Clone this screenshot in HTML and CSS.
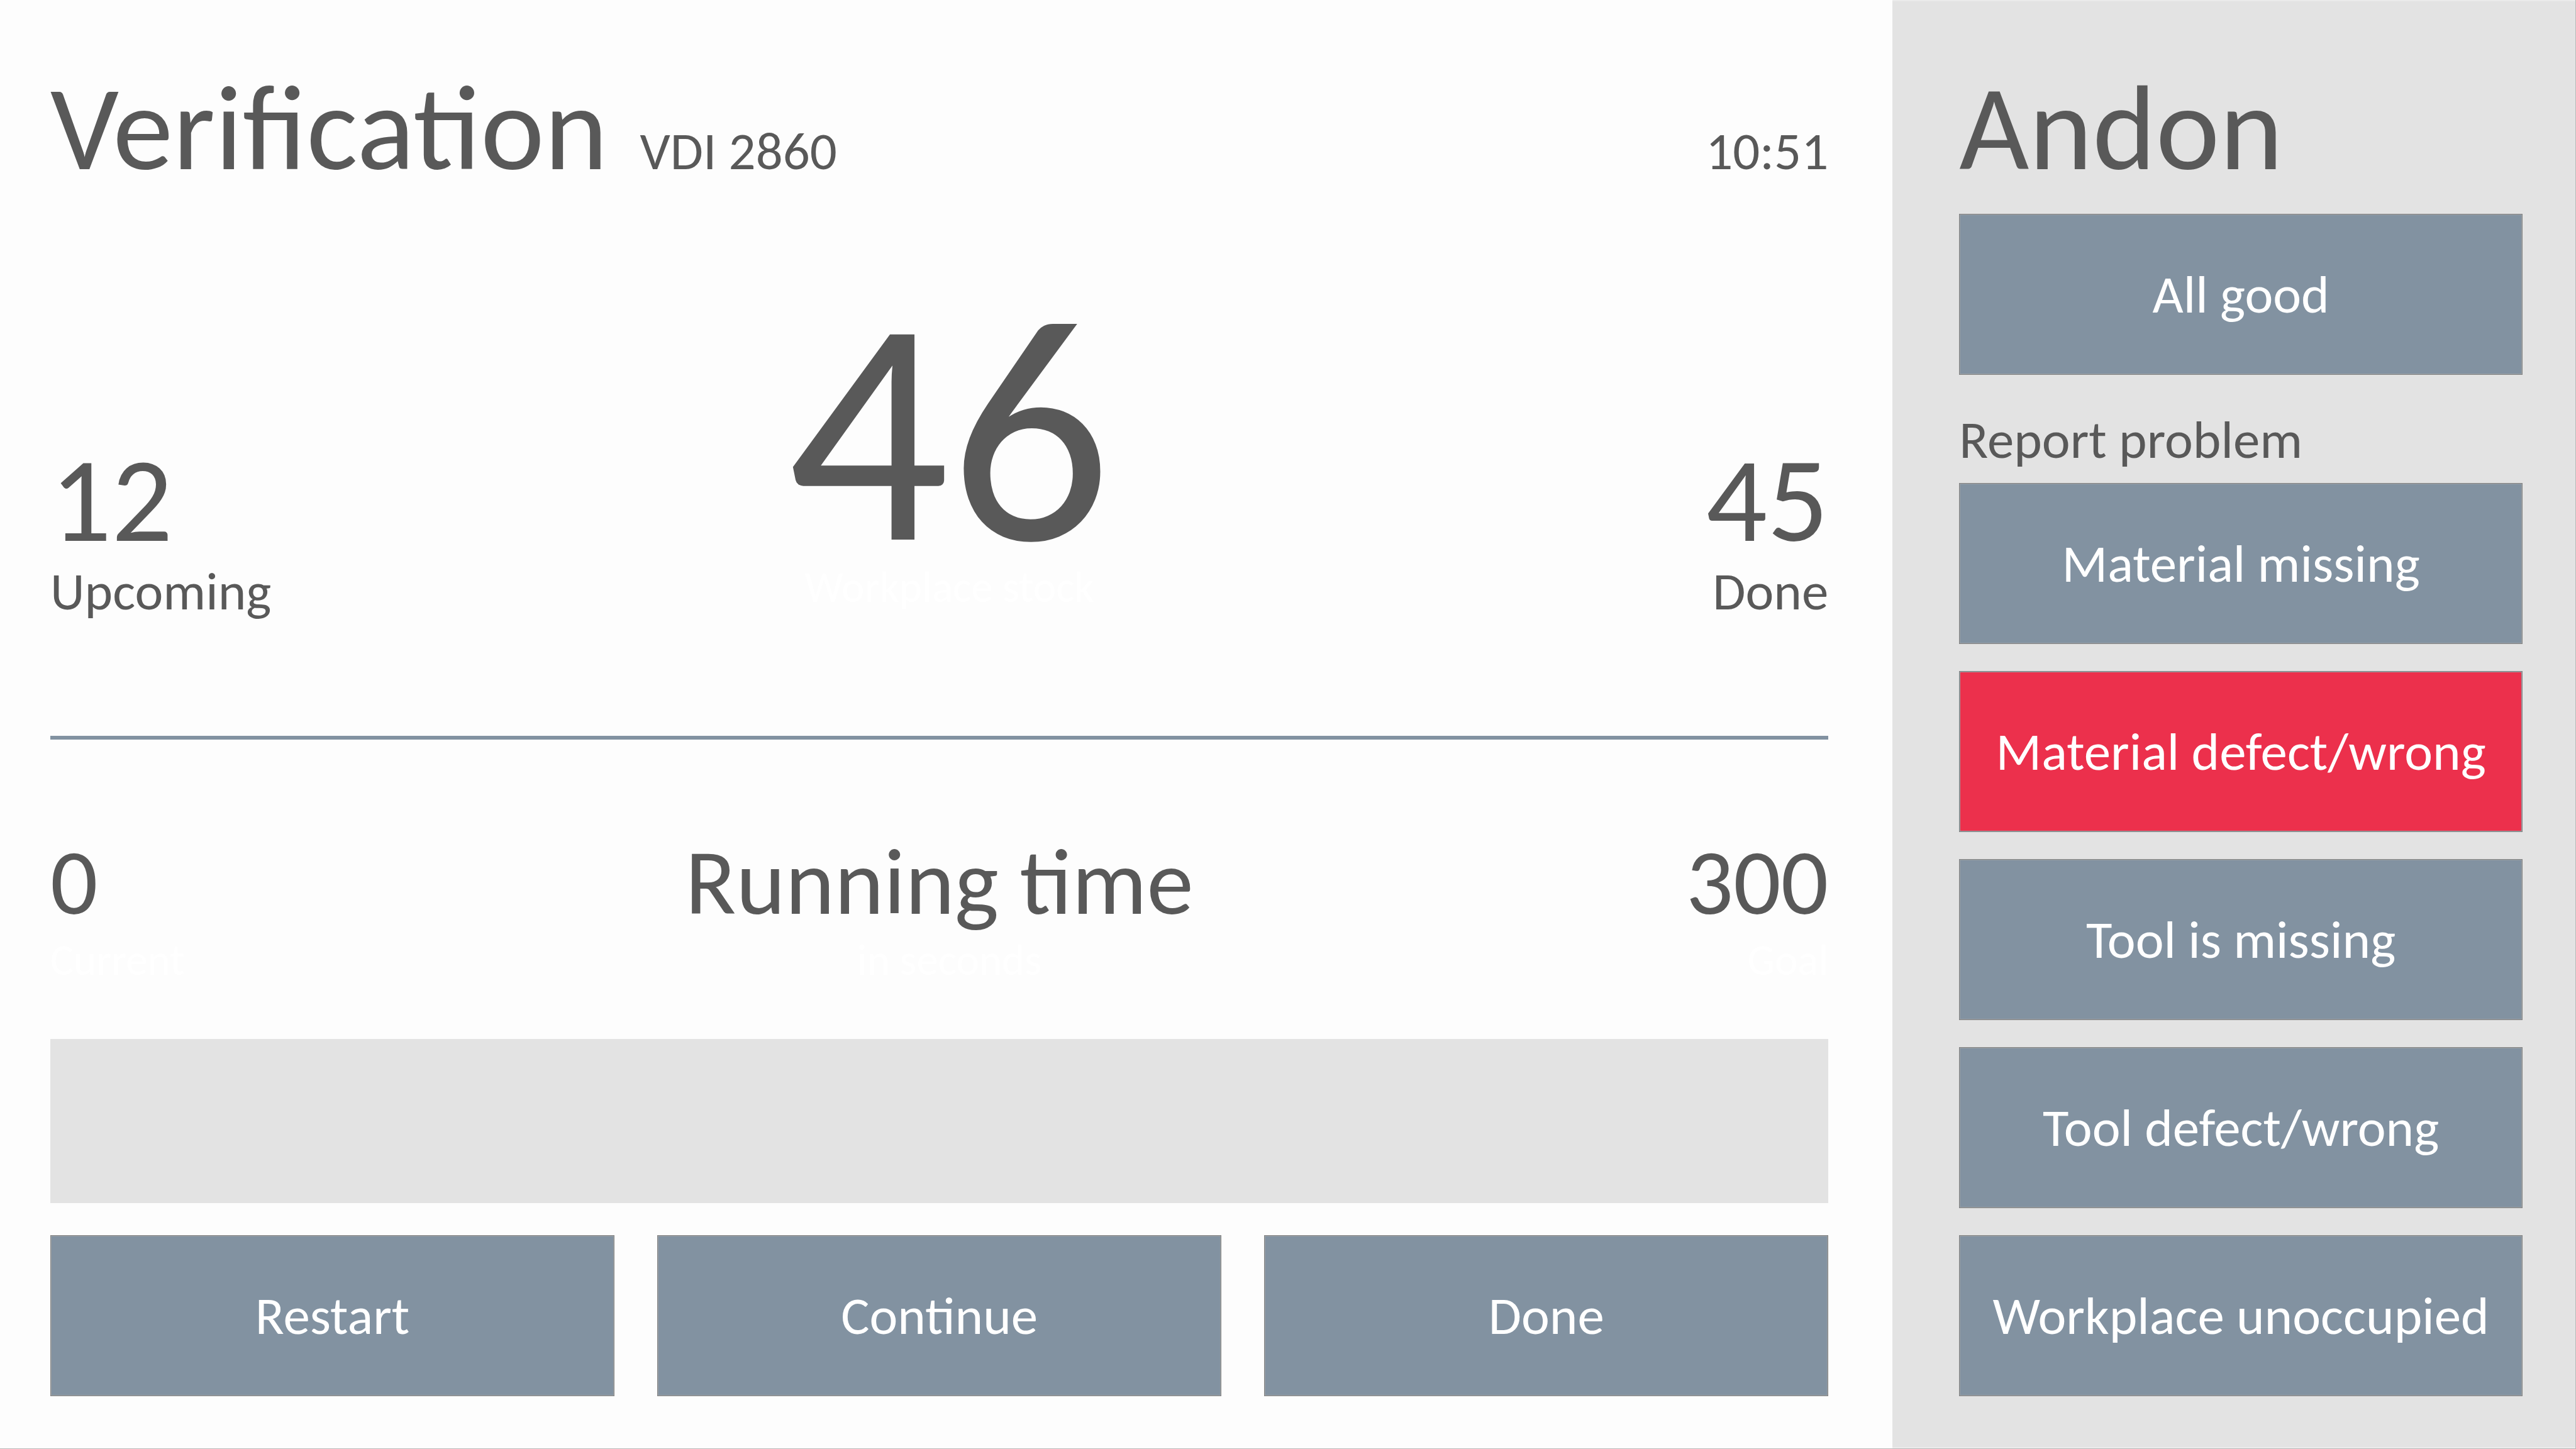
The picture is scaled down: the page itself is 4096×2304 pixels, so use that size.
FILE: index.html
```html
<!DOCTYPE html>
<html lang="en">
<head>
<meta charset="utf-8">
<meta name="viewport" content="width=device-width, initial-scale=1">
<title>Verification – VDI 2860</title>
<link rel="stylesheet" href="styles.css">
</head>
<body>
<div class="screen">
  <main class="station">
    <header class="station-header">
      <h1 class="title">Verification</h1>
      <span class="subtitle">VDI 2860</span>
      <time class="clock">10:51</time>
    </header>

    <section class="row stock">
      <div class="stat">
        <div class="number">12</div>
        <div class="caption">Upcoming</div>
      </div>
      <div class="stat stat-center">
        <div class="number-huge">46</div>
        <div class="caption-faint">Workplace stock</div>
      </div>
      <div class="stat stat-right">
        <div class="number">45</div>
        <div class="caption">Done</div>
      </div>
    </section>

    <hr class="rule">

    <section class="row timing">
      <div class="stat">
        <div class="number-medium">0</div>
        <div class="caption-faint">Current</div>
      </div>
      <div class="stat stat-center">
        <label class="number-medium" for="running-time">Running time</label>
        <div class="caption-faint unit">in seconds</div>
      </div>
      <div class="stat stat-right">
        <div class="number-medium">300</div>
        <div class="caption-faint">Goal</div>
      </div>
    </section>

    <progress class="progress" id="running-time" value="0" max="300"></progress>

    <div class="actions">
      <button class="button" type="button">Restart</button>
      <button class="button" type="button">Continue</button>
      <button class="button" type="button">Done</button>
    </div>
  </main>

  <aside class="andon">
    <h1 class="title">Andon</h1>
    <button class="button all-good" type="button">All good</button>
    <h2 class="group-title">Report problem</h2>
    <div class="problems">
      <button class="button" type="button">Material missing</button>
      <button class="button button-active" type="button">Material defect/wrong</button>
      <button class="button" type="button">Tool is missing</button>
      <button class="button" type="button">Tool defect/wrong</button>
      <button class="button" type="button">Workplace unoccupied</button>
    </div>
  </aside>
</div>
</body>
</html>
```
FILE: styles.css
```css
* {
  box-sizing: border-box;
}

body {
  margin: 0;
  background: #fdfdfd;
  color: #595959;
  font-family: Calibri, Carlito, Lato, sans-serif;
  font-size: 85px;
  line-height: 90px;
}

.screen {
  display: grid;
  grid-template-columns: 3010fr 1086fr;
  min-height: 100vh;
  border-right: 1px solid #b9b9b9;
  border-bottom: 1px solid #b9b9b9;
}

.station {
  display: flex;
  flex-direction: column;
  padding: 104px 102px 83px 80px;
}

.station-header {
  display: flex;
  align-items: baseline;
  gap: 51px;
}

.title {
  margin: 0;
  font-size: 192px;
  font-weight: 400;
  line-height: 200px;
}

.clock {
  margin-left: auto;
}

.row {
  display: grid;
  grid-template-columns: 1fr auto 1fr;
  align-items: end;
}

.stock {
  margin-top: 175px;
}

.stat-center {
  text-align: center;
}

.stock .stat-center {
  padding: 0 0 6px 32px;
}

.stat-right {
  text-align: right;
}

.number {
  font-size: 192px;
  line-height: 200px;
}

.number-huge {
  font-size: 508px;
  line-height: 410px;
}

.number-medium {
  display: block;
  font-size: 149px;
  line-height: 160px;
}

.caption-faint {
  color: #ffffff;
  font-size: 69px;
}

.unit {
  padding-left: 32px;
}

.rule {
  width: 100%;
  height: 6px;
  margin: 185px 0 146px;
  border: 0;
  background: #8292a1;
}

.progress {
  display: block;
  width: 100%;
  height: 261px;
  margin: 80px 0 51px;
  border: 0;
  background: #e3e3e3;
  appearance: none;
}

.progress::-webkit-progress-bar {
  background: #e3e3e3;
}

.progress::-webkit-progress-value {
  background: #8292a1;
}

.actions {
  display: grid;
  grid-template-columns: repeat(3, 1fr);
  gap: 68px;
}

.button {
  width: 100%;
  height: 256px;
  padding: 0;
  border: 1px solid #828282;
  border-radius: 0;
  background: #8292a1;
  box-shadow: inset 0 0 0 1px #999fa4;
  color: #ffffff;
  font: inherit;
  white-space: nowrap;
}

.button-active {
  background: #ec304c;
}

.andon {
  padding: 104px 84px 83px 106px;
  background: #e3e3e3;
  box-shadow: inset 0 2px #ebebeb, inset 0 -2px #ebebeb;
}

.all-good {
  display: block;
  margin-top: 36px;
}

.group-title {
  margin: 58px 0 24px;
  font-size: 85px;
  font-weight: 400;
}

.problems {
  display: grid;
  gap: 43px;
}
```
